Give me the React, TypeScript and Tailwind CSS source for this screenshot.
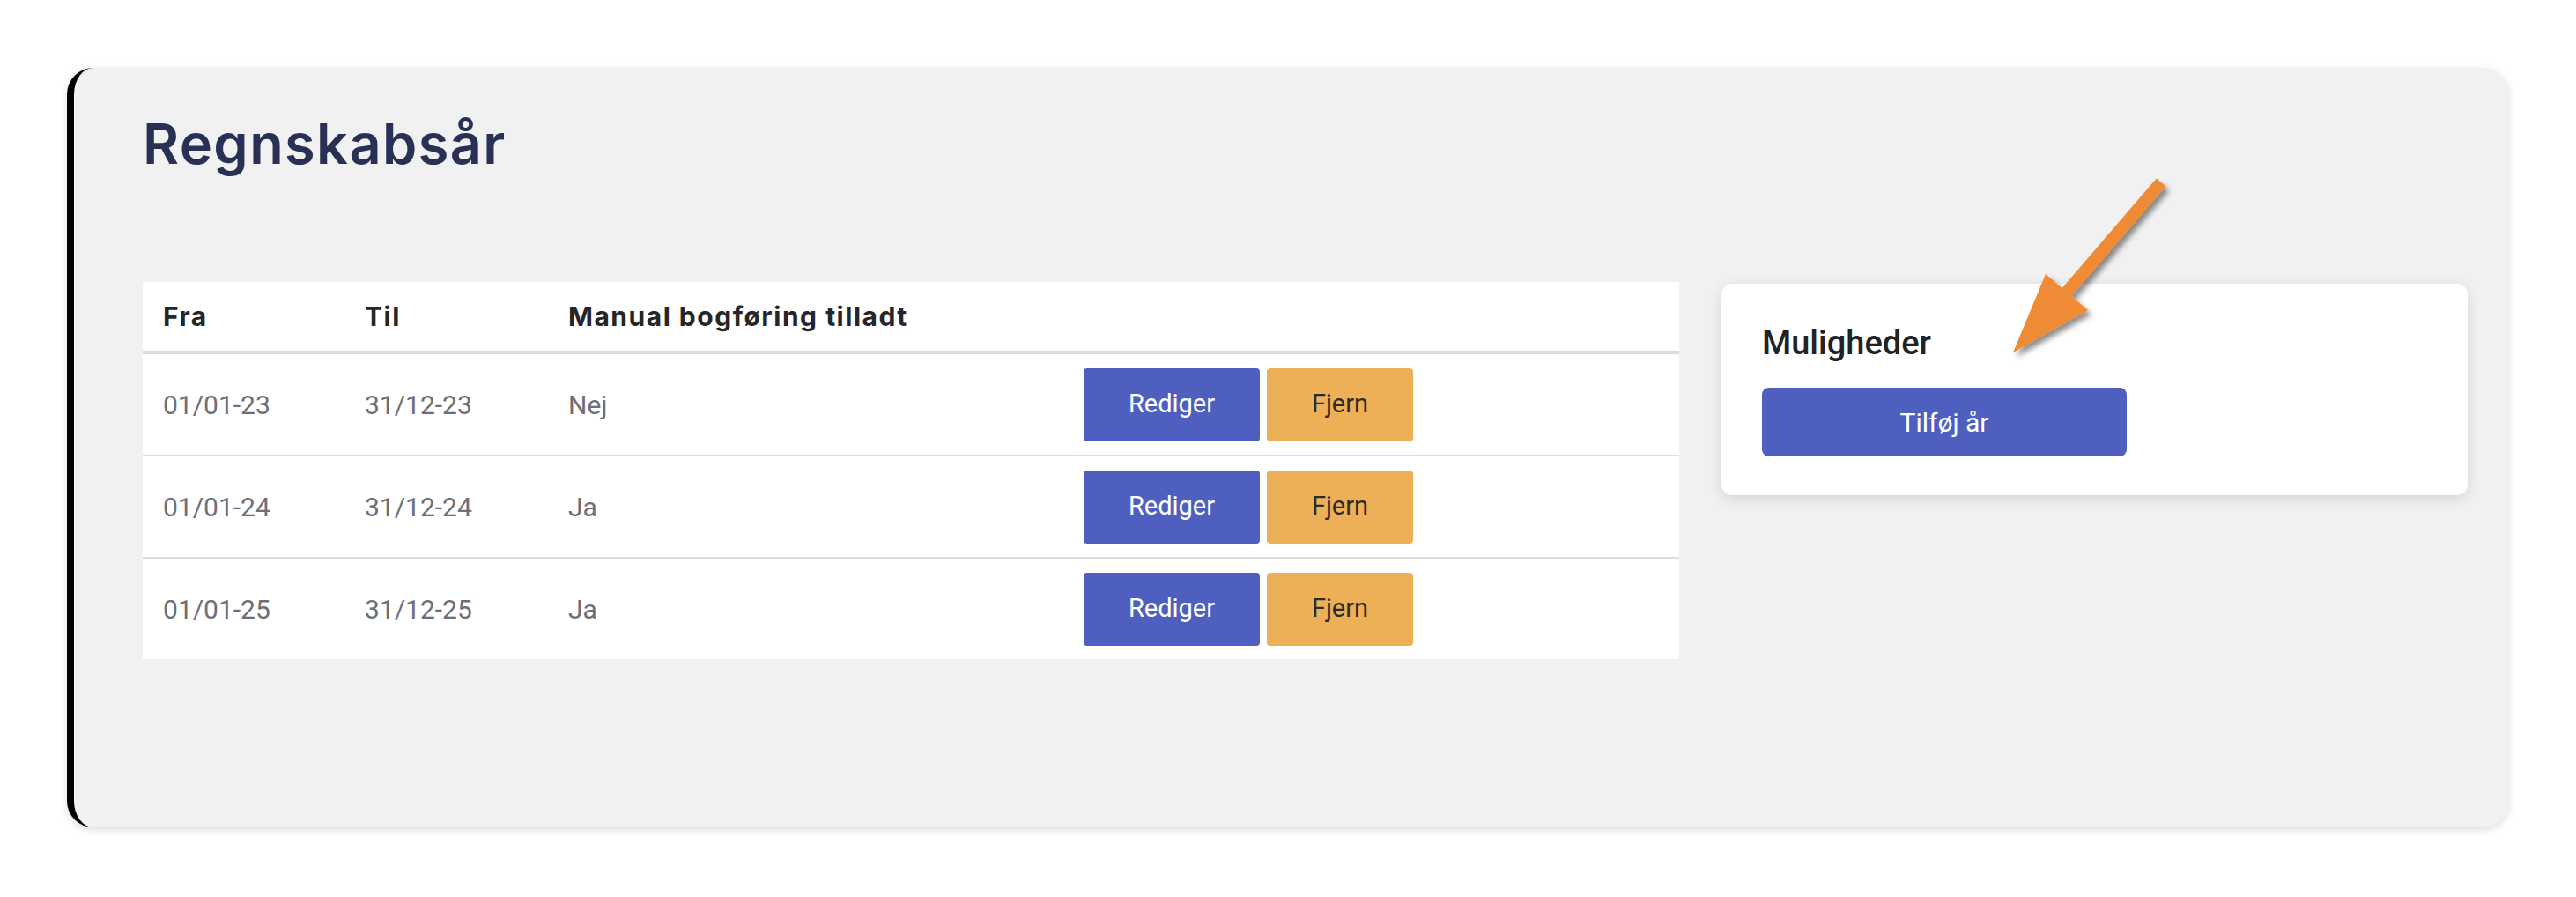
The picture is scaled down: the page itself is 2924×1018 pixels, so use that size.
import React from "react";

const rows = [
  { from: "01/01-23", to: "31/12-23", manual: "Nej" },
  { from: "01/01-24", to: "31/12-24", manual: "Ja" },
  { from: "01/01-25", to: "31/12-25", manual: "Ja" },
];

export default function App() {
  return (
    <div className="min-h-screen w-full bg-white font-['Roboto',sans-serif]">
      <div className="pt-[77px] pl-[76px]">
        <div className="relative w-[2772px] h-[862px] rounded-[30px] border-l-[8px] border-black bg-[#f1f1f1] shadow-[0_3px_10px_rgba(0,0,0,0.13)] pt-[55px] pl-[78px] pr-[47px]">
          <h1 className="font-['Inter',sans-serif] font-semibold text-[63px] leading-[63px] tracking-[1.4px] text-[#283056]">
            Regnskabsår
          </h1>

          <div className="mt-[125px] flex items-start gap-[48px]">
            <div className="w-[1744px] bg-white">
              <div className="grid grid-cols-[229px_231px_585px_1fr] h-[82px] items-center border-b-4 border-[#dcdcdc] font-['Inter',sans-serif] font-bold text-[30px] tracking-[1.5px] text-[#262626]">
                <div className="pl-[23px]">Fra</div>
                <div className="pl-[23px]">Til</div>
                <div className="pl-[23px]">Manual bogføring tilladt</div>
                <div />
              </div>
              {rows.map((r, i) => (
                <div
                  key={r.from}
                  className={
                    i < rows.length - 1
                      ? "grid grid-cols-[229px_231px_585px_1fr] h-[116px] items-center border-b-2 border-[#dedede] text-[30px] text-[#6e6e78]"
                      : "grid grid-cols-[229px_231px_585px_1fr] h-[114px] items-center text-[30px] text-[#6e6e78]"
                  }
                >
                  <div className="pl-[23px]">{r.from}</div>
                  <div className="pl-[23px]">{r.to}</div>
                  <div className="pl-[23px]">{r.manual}</div>
                  <div className="pl-[23px] flex gap-[8px]">
                    <button className="w-[200px] h-[83px] rounded-[4px] bg-[#4e5fc0] text-white text-[29px]">
                      Rediger
                    </button>
                    <button className="w-[166px] h-[83px] rounded-[4px] bg-[#edb057] text-[#2e2a26] text-[29px]">
                      Fjern
                    </button>
                  </div>
                </div>
              ))}
            </div>

            <div className="flex-1 mt-[2px] bg-white rounded-[12px] shadow-[0_4px_16px_rgba(0,0,0,0.12)] pl-[46px] pt-[48px] pb-[44px]">
              <h2 className="text-[38px] leading-[38px] font-medium text-[#222222]">Muligheder</h2>
              <button className="mt-[32px] w-[414px] h-[78px] rounded-[8px] bg-[#4e5fc0] text-white text-[30px]">
                Tilføj år
              </button>
            </div>
          </div>

          <svg
            className="absolute left-[2176px] top-[113px]"
            width="240"
            height="250"
            viewBox="0 0 240 250"
          >
            <defs>
              <filter id="arrowShadow" x="-20%" y="-20%" width="150%" height="150%">
                <feDropShadow dx="4" dy="5" stdDeviation="3" floodColor="#000000" floodOpacity="0.45" />
              </filter>
            </defs>
            <polygon
              points="187.7,12.4 198.3,21.6 91.3,146.1 110,162 25,210 62,121 80.7,136.9"
              fill="#ef8a34"
              filter="url(#arrowShadow)"
            />
          </svg>
        </div>
      </div>
    </div>
  );
}
